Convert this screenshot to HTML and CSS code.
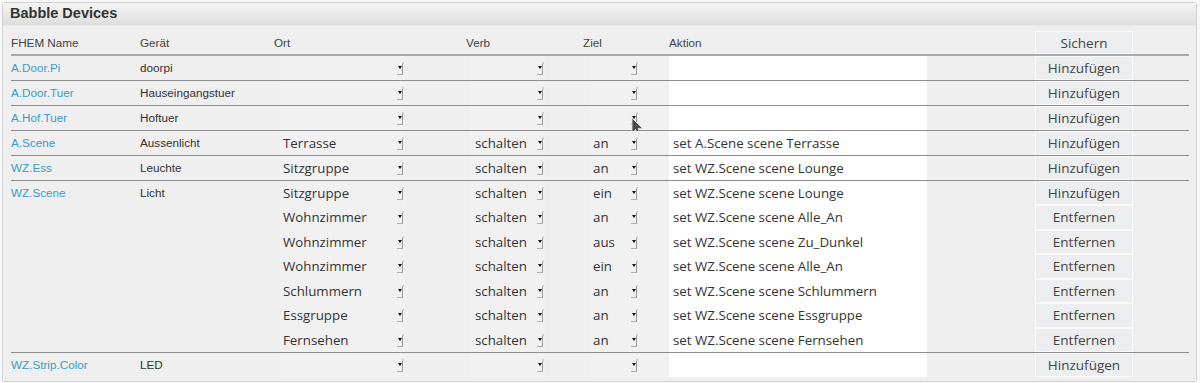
FILE: index.html
```html
<!DOCTYPE html>
<html lang="de">
<head>
<meta charset="utf-8">
<title>Babble Devices</title>
<link rel="stylesheet" href="styles.css">
</head>
<body>
<div class="panel">
  <div class="panel-head">Babble Devices</div>
  <div class="tbl">
    <div class="row head">
      <div class="c name">FHEM Name</div>
      <div class="c dev">Gerät</div>
      <div class="c ort">Ort</div>
      <div class="c verb">Verb</div>
      <div class="c ziel">Ziel</div>
      <div class="c akt">Aktion</div>
      <div class="c btn"><span class="button">Sichern</span></div>
    </div>

    <div class="group">
      <div class="row">
        <div class="c name"><a href="#">A.Door.Pi</a></div>
        <div class="c dev">doorpi</div>
        <div class="c ort"><span class="sel"><span class="val"></span><i class="arr"></i></span></div>
        <div class="c verb"><span class="sel"><span class="val"></span><i class="arr"></i></span></div>
        <div class="c ziel"><span class="sel"><span class="val"></span><i class="arr"></i></span></div>
        <div class="c akt"><span class="inp"></span></div>
        <div class="c btn"><span class="button">Hinzufügen</span></div>
      </div>
    </div>

    <div class="group">
      <div class="row">
        <div class="c name"><a href="#">A.Door.Tuer</a></div>
        <div class="c dev">Hauseingangstuer</div>
        <div class="c ort"><span class="sel"><span class="val"></span><i class="arr"></i></span></div>
        <div class="c verb"><span class="sel"><span class="val"></span><i class="arr"></i></span></div>
        <div class="c ziel"><span class="sel"><span class="val"></span><i class="arr"></i></span></div>
        <div class="c akt"><span class="inp"></span></div>
        <div class="c btn"><span class="button">Hinzufügen</span></div>
      </div>
    </div>

    <div class="group">
      <div class="row">
        <div class="c name"><a href="#">A.Hof.Tuer</a></div>
        <div class="c dev">Hoftuer</div>
        <div class="c ort"><span class="sel"><span class="val"></span><i class="arr"></i></span></div>
        <div class="c verb"><span class="sel"><span class="val"></span><i class="arr"></i></span></div>
        <div class="c ziel"><span class="sel"><span class="val"></span><i class="arr"></i><svg class="cursor" width="12" height="20" viewBox="0 0 12 20"><path d="M1 1 L1 16 L4.5 12.5 L7 18.5 L9.5 17.5 L7 11.5 L11.5 11.5 Z" fill="#4a4a4a" stroke="#e0e0e0" stroke-width="0.8" stroke-linejoin="round"/></svg></span></div>
        <div class="c akt"><span class="inp"></span></div>
        <div class="c btn"><span class="button">Hinzufügen</span></div>
      </div>
    </div>

    <div class="group">
      <div class="row">
        <div class="c name"><a href="#">A.Scene</a></div>
        <div class="c dev">Aussenlicht</div>
        <div class="c ort"><span class="sel"><span class="val">Terrasse</span><i class="arr"></i></span></div>
        <div class="c verb"><span class="sel"><span class="val">schalten</span><i class="arr"></i></span></div>
        <div class="c ziel"><span class="sel"><span class="val">an</span><i class="arr"></i></span></div>
        <div class="c akt"><span class="inp">set A.Scene scene Terrasse</span></div>
        <div class="c btn"><span class="button">Hinzufügen</span></div>
      </div>
    </div>

    <div class="group">
      <div class="row">
        <div class="c name"><a href="#">WZ.Ess</a></div>
        <div class="c dev">Leuchte</div>
        <div class="c ort"><span class="sel"><span class="val">Sitzgruppe</span><i class="arr"></i></span></div>
        <div class="c verb"><span class="sel"><span class="val">schalten</span><i class="arr"></i></span></div>
        <div class="c ziel"><span class="sel"><span class="val">an</span><i class="arr"></i></span></div>
        <div class="c akt"><span class="inp">set WZ.Scene scene Lounge</span></div>
        <div class="c btn"><span class="button">Hinzufügen</span></div>
      </div>
    </div>

    <div class="group">
      <div class="row">
        <div class="c name"><a href="#">WZ.Scene</a></div>
        <div class="c dev">Licht</div>
        <div class="c ort"><span class="sel"><span class="val">Sitzgruppe</span><i class="arr"></i></span></div>
        <div class="c verb"><span class="sel"><span class="val">schalten</span><i class="arr"></i></span></div>
        <div class="c ziel"><span class="sel"><span class="val">ein</span><i class="arr"></i></span></div>
        <div class="c akt"><span class="inp">set WZ.Scene scene Lounge</span></div>
        <div class="c btn"><span class="button">Hinzufügen</span></div>
      </div>
      <div class="row sub">
        <div class="c name"></div>
        <div class="c dev"></div>
        <div class="c ort"><span class="sel"><span class="val">Wohnzimmer</span><i class="arr"></i></span></div>
        <div class="c verb"><span class="sel"><span class="val">schalten</span><i class="arr"></i></span></div>
        <div class="c ziel"><span class="sel"><span class="val">an</span><i class="arr"></i></span></div>
        <div class="c akt"><span class="inp">set WZ.Scene scene Alle_An</span></div>
        <div class="c btn"><span class="button">Entfernen</span></div>
      </div>
      <div class="row sub">
        <div class="c name"></div>
        <div class="c dev"></div>
        <div class="c ort"><span class="sel"><span class="val">Wohnzimmer</span><i class="arr"></i></span></div>
        <div class="c verb"><span class="sel"><span class="val">schalten</span><i class="arr"></i></span></div>
        <div class="c ziel"><span class="sel"><span class="val">aus</span><i class="arr"></i></span></div>
        <div class="c akt"><span class="inp">set WZ.Scene scene Zu_Dunkel</span></div>
        <div class="c btn"><span class="button">Entfernen</span></div>
      </div>
      <div class="row sub">
        <div class="c name"></div>
        <div class="c dev"></div>
        <div class="c ort"><span class="sel"><span class="val">Wohnzimmer</span><i class="arr"></i></span></div>
        <div class="c verb"><span class="sel"><span class="val">schalten</span><i class="arr"></i></span></div>
        <div class="c ziel"><span class="sel"><span class="val">ein</span><i class="arr"></i></span></div>
        <div class="c akt"><span class="inp">set WZ.Scene scene Alle_An</span></div>
        <div class="c btn"><span class="button">Entfernen</span></div>
      </div>
      <div class="row sub">
        <div class="c name"></div>
        <div class="c dev"></div>
        <div class="c ort"><span class="sel"><span class="val">Schlummern</span><i class="arr"></i></span></div>
        <div class="c verb"><span class="sel"><span class="val">schalten</span><i class="arr"></i></span></div>
        <div class="c ziel"><span class="sel"><span class="val">an</span><i class="arr"></i></span></div>
        <div class="c akt"><span class="inp">set WZ.Scene scene Schlummern</span></div>
        <div class="c btn"><span class="button">Entfernen</span></div>
      </div>
      <div class="row sub">
        <div class="c name"></div>
        <div class="c dev"></div>
        <div class="c ort"><span class="sel"><span class="val">Essgruppe</span><i class="arr"></i></span></div>
        <div class="c verb"><span class="sel"><span class="val">schalten</span><i class="arr"></i></span></div>
        <div class="c ziel"><span class="sel"><span class="val">an</span><i class="arr"></i></span></div>
        <div class="c akt"><span class="inp">set WZ.Scene scene Essgruppe</span></div>
        <div class="c btn"><span class="button">Entfernen</span></div>
      </div>
      <div class="row sub">
        <div class="c name"></div>
        <div class="c dev"></div>
        <div class="c ort"><span class="sel"><span class="val">Fernsehen</span><i class="arr"></i></span></div>
        <div class="c verb"><span class="sel"><span class="val">schalten</span><i class="arr"></i></span></div>
        <div class="c ziel"><span class="sel"><span class="val">an</span><i class="arr"></i></span></div>
        <div class="c akt"><span class="inp">set WZ.Scene scene Fernsehen</span></div>
        <div class="c btn"><span class="button">Entfernen</span></div>
      </div>
    </div>

    <div class="group">
      <div class="row">
        <div class="c name"><a href="#">WZ.Strip.Color</a></div>
        <div class="c dev">LED</div>
        <div class="c ort"><span class="sel"><span class="val"></span><i class="arr"></i></span></div>
        <div class="c verb"><span class="sel"><span class="val"></span><i class="arr"></i></span></div>
        <div class="c ziel"><span class="sel"><span class="val"></span><i class="arr"></i></span></div>
        <div class="c akt"><span class="inp"></span></div>
        <div class="c btn"><span class="button">Hinzufügen</span></div>
      </div>
    </div>
  </div>
</div>
</body>
</html>
```

FILE: styles.css
```css
html, body {
  margin: 0;
  padding: 0;
  background: #f7f7f7;
}
body {
  width: 1200px;
  height: 383px;
  overflow: hidden;
  font-family: "Liberation Sans", Arial, sans-serif;
  color: #333;
}
.panel {
  margin: 2px 0 0 2px;
  width: 1193px;
  height: 378px;
  border: 1px solid #d4d4d4;
  border-radius: 3px;
  background: #efefef;
  box-sizing: content-box;
}
.panel-head {
  height: 22px;
  line-height: 21px;
  padding-left: 7px;
  font-weight: bold;
  font-size: 14.5px;
  color: #333;
  background: linear-gradient(#f4f4f4, #dedede);
  border-bottom: 1px solid #e8e8e8;
}
.tbl {
  margin: 4px 0 0 8px;
  width: 1178px;
}
.row {
  display: grid;
  grid-template-columns: 129px 134px 192px 117px 86px 366px 154px;
  height: 24px;
  align-items: stretch;
}
.row.sub {
  height: 24.5px;
}
.row.head {
  height: 24px;
  border-bottom: 2px solid #a9a9a9;
}
.group {
  border-top: 1px solid #8d8d8d;
}
.row.head + .group {
  border-top: none;
}
.c {
  display: flex;
  align-items: center;
  font-size: 11.7px;
  white-space: nowrap;
  min-width: 0;
}
.head .c {
  color: #444;
  padding-top: 1px;
}
.name a {
  color: #3a9cc8;
  text-decoration: none;
}
.group .name, .group .dev {
  align-items: flex-start;
  padding-top: 5px;
}
.sel {
  position: relative;
  display: flex;
  align-items: center;
  height: 100%;
  background: #f1f1f2;
  font-family: "Open Sans", "Noto Sans", sans-serif;
  font-size: 13.3px;
  color: #333;
}
.ort .sel { margin-left: 6px; width: 125px; }
.verb .sel { margin-left: 4px; width: 75px; }
.ziel .sel { margin-left: 6px; width: 80px; }
.val {
  flex: 1;
  padding-left: 3px;
}
.verb .val { padding-left: 5px; }
.ziel .val { padding-left: 4px; }
.arr {
  position: relative;
  display: block;
  width: 6px;
  height: 13px;
  margin-right: 2px;
  margin-top: 1px;
  border-right: 1.5px solid #9a9a9a;
  border-bottom: 1.5px solid #b0b0b0;
  box-sizing: border-box;
}
.arr::before {
  content: "";
  position: absolute;
  right: -1.5px;
  top: 0;
  width: 2px;
  height: 2px;
  background: #d0d0d0;
}
.arr::after {
  content: "";
  position: absolute;
  left: 0.5px;
  top: 4px;
  border-left: 2px solid transparent;
  border-right: 2px solid transparent;
  border-top: 3.5px solid #111;
}
.ziel .arr { margin-right: 32px; }
.cursor {
  position: absolute;
  left: 42px;
  top: 11px;
}
.inp {
  display: flex;
  align-items: center;
  width: 258px;
  height: 100%;
  padding-left: 4px;
  box-sizing: border-box;
  background: #ffffff;
  font-family: "Open Sans", "Noto Sans", sans-serif;
  font-size: 13.3px;
  color: #333;
}
.btn {
  align-items: stretch;
}
.button {
  display: flex;
  align-items: center;
  justify-content: center;
  width: 98px;
  box-sizing: border-box;
  border: 1px solid #f9f9f9;
  background: #eceef0;
  font-family: "Open Sans", "Noto Sans", sans-serif;
  font-size: 13.5px;
  color: #444;
}
```
